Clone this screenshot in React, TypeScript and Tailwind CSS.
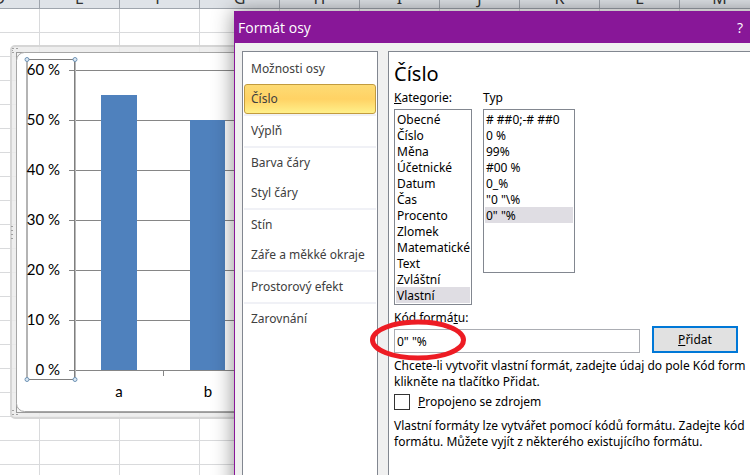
const columns = ["D", "E", "F", "G", "H", "I", "J", "K", "L", "M", "N", "O"];
const rows = Array.from({ length: 24 }, (_, i) => i);

const navGroups = [
  ["Možnosti osy", "Číslo"],
  ["Výplň"],
  ["Barva čáry", "Styl čáry"],
  ["Stín", "Záře a měkké okraje"],
  ["Prostorový efekt"],
  ["Zarovnání"],
];

const categories = [
  "Obecné",
  "Číslo",
  "Měna",
  "Účetnické",
  "Datum",
  "Čas",
  "Procento",
  "Zlomek",
  "Matematické",
  "Text",
  "Zvláštní",
  "Vlastní",
];

const types = ["# ##0;-# ##0", "0 %", "99%", "#00 %", "0_%", '"0 "\\%', '0" "%'];

const Sheet = () => {
  return (
    <table className="table-fixed border-collapse w-[960px] -ml-[41px] -mt-4 bg-white">
      <thead>
        <tr>
          {columns.map((c) => (
            <th
              key={c}
              className="h-6 w-20 p-0 pt-1 border-r border-b border-[#9fa5ad] bg-[#dfe3e8] text-base leading-4 font-normal text-[#333] align-middle"
            >
              {c}
            </th>
          ))}
        </tr>
      </thead>
      <tbody>
        {rows.map((r) => (
          <tr key={r}>
            {columns.map((c) => (
              <td key={c} className="h-6 p-0 border border-[#d9dadc]" />
            ))}
          </tr>
        ))}
      </tbody>
    </table>
  );
};

const Chart = () => {
  return (
    <div className="absolute left-[10px] top-[45px] w-[460px] h-[374px]">
      <svg
        width="460"
        height="374"
        viewBox="10 45 460 374"
        className="font-['Lato',sans-serif] text-[15px]"
      >
        {/* object frame */}
        <rect x="11" y="46" width="458" height="372" rx="4" fill="#ebebeb" fillOpacity="0.85" stroke="#d6d6d6" strokeWidth="2" />
        <rect x="16.5" y="52.5" width="446" height="360" fill="#f4f4f4" stroke="#9a9a9a" />
        <rect x="16.5" y="52.5" width="446" height="359" rx="8" fill="#fff" stroke="#a6a6a6" />
        <g fill="#a0a0a0">
          <path d="M12 48h2v1h-2zM16 48h2v1h-2zM12 52h2v1h-2zM12 50h1v1h-1z" />
          <path d="M12 410h2v1h-2zM12 414h2v1h-2zM16 414h2v1h-2z" />
          <path d="M11 226h2v1h-2zM11 230h2v1h-2zM11 234h2v1h-2zM11 238h2v1h-2z" />
        </g>
        {/* grid lines and bars */}
        <path
          d="M69 70.500H460M69 120.500H460M69 170.500H460M69 220.500H460M69 270.500H460M69 320.500H460M69 370.500H460M163.500 370V376"
          stroke="#868686"
          fill="none"
        />
        <rect x="101" y="95" width="36" height="275" fill="#4f81bd" />
        <rect x="190" y="120" width="35" height="250" fill="#4f81bd" />
        {/* selected axis */}
        <path d="M27 59V380" stroke="#b4b4b4" strokeWidth="2" />
        <path d="M74.500 59V380M26 59.500H76M26 379.500H76" stroke="#7f7f7f" />
        <path d="M75.500 59V380" stroke="#b8b8b8" />
        <g fill="#dbe9f5" stroke="#6f93b5">
          <circle cx="27" cy="59.500" r="2" />
          <circle cx="75" cy="59.500" r="2" />
          <circle cx="27" cy="379.500" r="2" />
          <circle cx="75" cy="379.500" r="2" />
        </g>
        <g textAnchor="end">
          <text x="60" y="75">60 %</text>
          <text x="60" y="125">50 %</text>
          <text x="60" y="175">40 %</text>
          <text x="60" y="225">30 %</text>
          <text x="60" y="275">20 %</text>
          <text x="60" y="325">10 %</text>
          <text x="60" y="375">0 %</text>
        </g>
        <g textAnchor="middle">
          <text x="119" y="397">a</text>
          <text x="208" y="397">b</text>
        </g>
      </svg>
    </div>
  );
};

const Nav = () => {
  return (
    <nav className="w-[136px] shrink-0 border border-b-0 border-[#828790] bg-white px-px pt-0.5 whitespace-nowrap text-[#404040]">
      {navGroups.map((group, i) => (
        <div key={group[0]} className={i > 0 ? "border-t-2 border-[#f0f1f6]" : ""}>
          {group.map((item) => (
            <button
              key={item}
              type="button"
              className={
                item === "Číslo"
                  ? "block h-[30px] w-full rounded-[3px] border border-[#c29b3e] bg-linear-to-b from-[#fddb74] via-[#ffd264] to-[#fff08a] px-1.5 text-left"
                  : "block h-[30px] w-full px-[7px] text-left"
              }
            >
              {item}
            </button>
          ))}
        </div>
      ))}
    </nav>
  );
};

type ListProps = { id: string; items: string[]; selected: string; className: string };

const List = ({ id, items, selected, className }: ListProps) => {
  return (
    <select
      id={id}
      size={items.length}
      defaultValue={selected}
      className={`block appearance-none overflow-hidden rounded-none border border-[#828790] bg-white p-px outline-none ${className}`}
    >
      {items.map((item) => (
        <option
          key={item}
          value={item}
          className="block h-4 min-h-0 p-0 pl-px leading-4 text-black checked:bg-[linear-gradient(#dfdde3,#dfdde3)]"
        >
          {item}
        </option>
      ))}
    </select>
  );
};

const Dialog = () => {
  return (
    <section className="absolute left-[234px] top-[11px] flex h-[560px] w-[620px] flex-col border border-[#881798] bg-[#f0f0f0] shadow-[0_0_20px_rgba(0,0,0,0.45)]">
      <header className="flex h-[31px] shrink-0 items-center justify-between bg-[#881798] pl-[3px] pr-[110px] font-['Open_Sans',sans-serif] text-[14px] text-white">
        <h1>Formát osy</h1>
        <button type="button">?</button>
      </header>
      <div className="flex grow gap-[10px] pl-[7px] pt-2">
        <Nav />
        <div className="grow border border-r-0 border-b-0 border-[#828790] bg-white pl-[5px] pt-2 whitespace-nowrap">
          <h2 className="text-xl leading-7">Číslo</h2>
          <div className="mt-0.5 flex gap-[11px]">
            <div>
              <label htmlFor="category" className="block h-[19px] leading-4">
                <u>K</u>ategorie:
              </label>
              <List id="category" items={categories} selected="Vlastní" className="h-[196px] w-[78px]" />
            </div>
            <div>
              <label htmlFor="type" className="block h-[19px] leading-4">
                Typ
              </label>
              <List id="type" items={types} selected={'0" "%'} className="h-[164px] w-[92px]" />
            </div>
          </div>
          <label htmlFor="code" className="mt-[5px] block leading-4">
            Kód formá<u>t</u>u:
          </label>
          <div className="flex items-end gap-3">
            <input
              id="code"
              type="text"
              defaultValue={'0" "%'}
              className="h-6 w-[246px] border border-[#abadb3] bg-white px-0.5 outline-none"
            />
            <button type="button" className="h-[27px] w-[86px] border-2 border-[#0078d7] bg-[#e1e1e1]">
              <u>P</u>řidat
            </button>
          </div>
          <p className="mt-[5px] leading-4">
            Chcete-li vytvořit vlastní formát, zadejte údaj do pole Kód form
            <br />
            klikněte na tlačítko Přidat.
          </p>
          <div className="mt-1 flex items-center gap-2">
            <input id="linked" type="checkbox" className="size-4 appearance-none border border-[#333] bg-white" />
            <label htmlFor="linked" className="leading-4">
              <u>P</u>ropojeno se zdrojem
            </label>
          </div>
          <p className="mt-2 leading-4">
            Vlastní formáty lze vytvářet pomocí kódů formátu. Zadejte kód
            <br />
            formátu. Můžete vyjít z některého existujícího formátu.
          </p>
        </div>
      </div>
    </section>
  );
};

const App = () => {
  return (
    <main className="relative h-screen overflow-hidden bg-white font-['Noto_Sans',sans-serif] text-[12px] text-black">
      <Sheet />
      <Chart />
      <Dialog />
      {/* red marker around the format code */}
      <svg className="pointer-events-none absolute left-[368px] top-[318px]" width="100" height="44">
        <ellipse cx="50" cy="22" rx="45.500" ry="18" fill="none" stroke="#ed1c24" strokeWidth="5" />
      </svg>
    </main>
  );
};

export default App;
